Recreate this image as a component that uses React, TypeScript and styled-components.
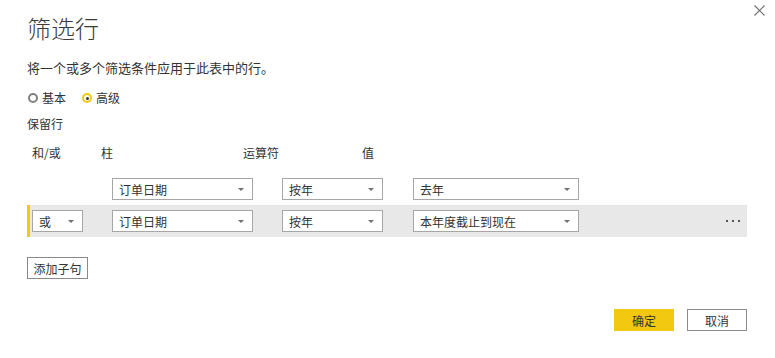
import * as React from 'react';
import styled, { createGlobalStyle } from 'styled-components';

const yellow = '#F2C811';
const text = '#333333';
const grey = '#a6a6a6';

const GlobalStyle = createGlobalStyle`
	html, body {
		margin: 0;
		padding: 0;
		background: #ffffff;
	}
	body {
		font-family: "Segoe UI", "Noto Sans CJK SC", "Noto Sans", sans-serif;
		color: ${text};
	}
`;

interface Clause {
	join?: string
	column: string
	operator: string
	value: string
	active?: boolean
}

const clauses: Clause[] = [
	{ column: '订单日期', operator: '按年', value: '去年' },
	{ join: '或', column: '订单日期', operator: '按年', value: '本年度截止到现在', active: true },
];

const Select = ({ value, width }: { value: string, width: number }) => (
	<SelectBox style={{ width }}>
		<span>{value}</span>
		<Caret />
	</SelectBox>
);

export default function App() {
	return (
		<Dialog>
			<GlobalStyle />
			<CloseButton aria-label="close">
				<svg width="11" height="11" viewBox="0 0 11 11">
					<path d="M0.5 0.5 L10.5 10.5 M10.5 0.5 L0.5 10.5" stroke="#6f6f6f" strokeWidth="1.1" fill="none" />
				</svg>
			</CloseButton>
			<Title>筛选行</Title>
			<Subtitle>将一个或多个筛选条件应用于此表中的行。</Subtitle>
			<RadioRow>
				<RadioLabel><Radio checked={false} />基本</RadioLabel>
				<RadioLabel><Radio checked />高级</RadioLabel>
			</RadioRow>
			<Keep>保留行</Keep>
			<Header>
				<HeaderCell width={69}>和/或</HeaderCell>
				<HeaderCell width={142}>柱</HeaderCell>
				<HeaderCell width={119}>运算符</HeaderCell>
				<HeaderCell>值</HeaderCell>
			</Header>
			<Clauses>
				{clauses.map((c, i) => (
					<Row key={i} active={!!c.active}>
						<Cell width={51}>{c.join && <Select value={c.join} width={51} />}</Cell>
						<Cell width={141} gap={29}><Select value={c.column} width={141} /></Cell>
						<Cell width={101} gap={29}><Select value={c.operator} width={101} /></Cell>
						<Cell width={166} gap={30}><Select value={c.value} width={166} /></Cell>
						<More>{c.active && <><Dot /><Dot /><Dot /></>}</More>
					</Row>
				))}
			</Clauses>
			<AddButton>添加子句</AddButton>
			<Footer>
				<PrimaryButton>确定</PrimaryButton>
				<SecondaryButton>取消</SecondaryButton>
			</Footer>
		</Dialog>
	);
}

const Dialog = styled.div`
	position: relative;
	box-sizing: border-box;
	width: 775px;
	height: 358px;
	padding: 12px 28px 0 27px;
	display: flex;
	flex-direction: column;
	font-size: 12px;
`;

const CloseButton = styled.div`
	position: absolute;
	top: 5px;
	right: 10px;
	width: 11px;
	height: 11px;
	display: flex;
`;

const Title = styled.h1`
	margin: 0;
	font-size: 24px;
	line-height: 32px;
	font-weight: 300;
	color: #3b3b3b;
`;

const Subtitle = styled.p`
	margin: 16px 0 0;
	font-size: 13px;
	line-height: 16px;
`;

const RadioRow = styled.div`
	margin-top: 14px;
	display: flex;
	gap: 15px;
	height: 16px;
	align-items: center;
`;

const RadioLabel = styled.label`
	display: flex;
	align-items: center;
	gap: 4px;
	font-size: 12px;
	line-height: 16px;
	margin-left: 1px;
`;

const Radio = styled.span<{ checked: boolean }>`
	box-sizing: border-box;
	width: 10px;
	height: 10px;
	border-radius: 50%;
	border: 2px solid ${p => p.checked ? yellow : '#808080'};
	background: #fff;
	display: flex;
	align-items: center;
	justify-content: center;

	&::after {
		content: '';
		display: ${p => p.checked ? 'block' : 'none'};
		width: 3px;
		height: 3px;
		border-radius: 50%;
		background: #333;
	}
`;

const Keep = styled.div`
	margin-top: 10px;
	line-height: 16px;
`;

const Header = styled.div`
	margin-top: 13px;
	display: flex;
	padding-left: 5px;
	line-height: 16px;
`;

const HeaderCell = styled.div<{ width?: number }>`
	flex: ${p => p.width ? `0 0 ${p.width}px` : '1'};
`;

const Clauses = styled.div`
	margin-top: 12px;
	display: flex;
	flex-direction: column;
`;

const Row = styled.div<{ active: boolean }>`
	display: flex;
	align-items: center;
	height: 32px;
	box-sizing: border-box;
	padding-left: 2px;
	border-left: 3px solid ${p => p.active ? yellow : 'transparent'};
	background: ${p => p.active ? '#e8e8e8' : 'transparent'};
`;

const Cell = styled.div<{ width: number, gap?: number }>`
	flex: 0 0 ${p => p.width}px;
	margin-left: ${p => p.gap || 0}px;
	height: 22px;
`;

const SelectBox = styled.div`
	box-sizing: border-box;
	height: 22px;
	border: 1px solid ${grey};
	background: #fff;
	display: flex;
	align-items: center;
	justify-content: space-between;
	padding: 0 8px 0 6px;
	font-size: 12px;
`;

const Caret = styled.span`
	width: 0;
	height: 0;
	border-left: 3px solid transparent;
	border-right: 3px solid transparent;
	border-top: 3px solid #707070;
`;

const More = styled.div`
	margin-left: auto;
	padding-right: 7px;
	display: flex;
	gap: 4px;
`;

const Dot = styled.span`
	width: 2px;
	height: 2px;
	background: #555;
`;

const Button = styled.button`
	box-sizing: border-box;
	height: 22px;
	font-family: inherit;
	font-size: 12px;
	color: ${text};
	padding: 0;
	cursor: pointer;
`;

const AddButton = styled(Button)`
	margin-top: 20px;
	width: 61px;
	border: 1px solid #8a8a8a;
	background: #fff;
`;

const Footer = styled.div`
	margin-top: 30px;
	display: flex;
	justify-content: flex-end;
	gap: 13px;
`;

const PrimaryButton = styled(Button)`
	width: 60px;
	border: none;
	background: ${yellow};
`;

const SecondaryButton = styled(Button)`
	width: 60px;
	border: 1px solid #8a8a8a;
	background: #fff;
`;
